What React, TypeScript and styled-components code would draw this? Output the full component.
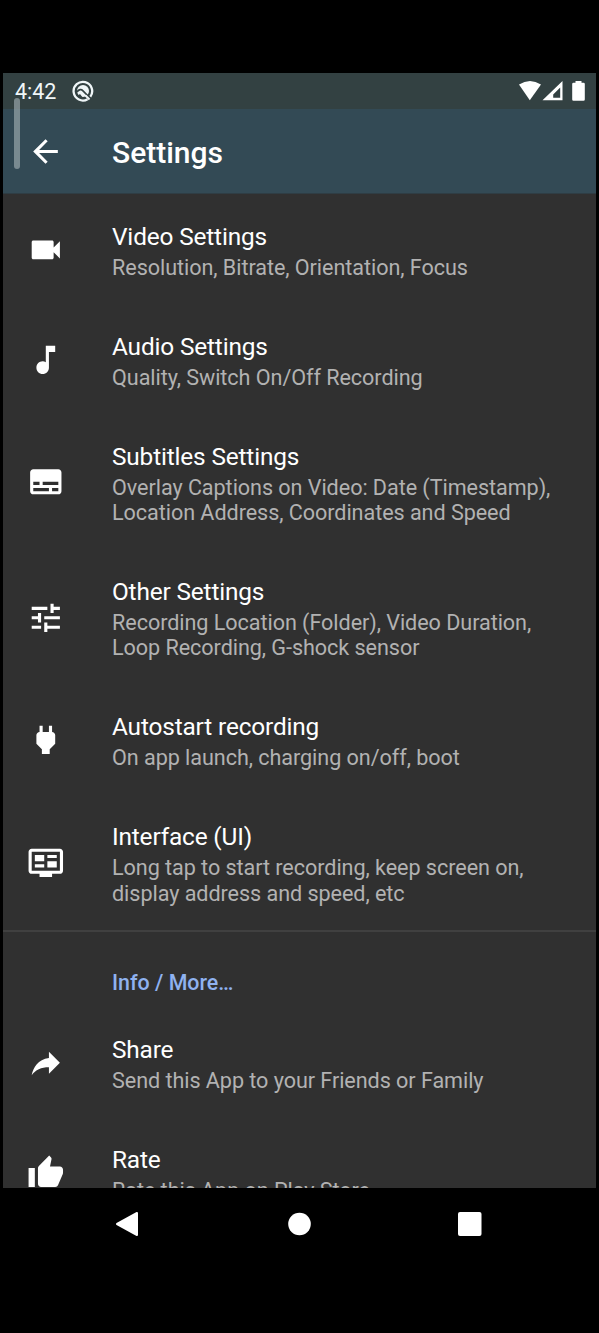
import React from "react";
import styled, { createGlobalStyle } from "styled-components";
import { MdVideocam, MdMusicNote, MdSubtitles, MdTune, MdThumbUp, MdArrowBack } from "react-icons/md";

const GlobalStyle = createGlobalStyle`
  *, *::before, *::after { box-sizing: border-box; }
  body { margin: 0; background: #000; }
`;

const Screen = styled.div`
  height: 1333px;
  padding: 73px 3px 0;
  display: flex;
  flex-direction: column;
  overflow: hidden;
  background: #000;
  color: #fff;
  font-family: Roboto, sans-serif;
`;

const StatusBar = styled.header`
  position: relative;
  height: 36px;
  flex: none;
  display: flex;
  align-items: center;
  justify-content: space-between;
  padding: 0 11px 0 12px;
  background: #334142;
`;

const StatusGroup = styled.div<{ $gap: number }>`
  display: flex;
  align-items: center;
  gap: ${(p) => p.$gap}px;
`;

const Clock = styled.span`
  padding-top: 1px;
  font-size: 21.5px;
  line-height: 36px;
  color: #f0f6f8;
`;

const ScrollHandle = styled.div`
  position: absolute;
  left: 11px;
  top: 25px;
  width: 6px;
  height: 71px;
  border-radius: 3px;
  background: rgba(160, 172, 176, 0.65);
  z-index: 1;
`;

const Toolbar = styled.div`
  height: 85px;
  flex: none;
  display: flex;
  align-items: center;
  background: #334a55;
  border-bottom: 1px solid #2f3d44;
`;

const IconSlot = styled.div`
  width: 109px;
  flex: none;
  display: flex;
  padding: 1px 0 0 23.7px;
  svg { display: block; flex: none; }
`;

const PageTitle = styled.h1`
  margin: 0;
  padding-top: 3px;
  font-size: 30px;
  line-height: 36px;
  font-weight: 500;
`;

const Content = styled.main`
  height: 994px;
  flex: none;
  overflow: hidden;
  background: #303030;
`;

const Row = styled.div<{ $lines: number }>`
  height: ${(p) => 110 + (p.$lines - 1) * 25.4}px;
  display: flex;
  align-items: center;
`;

const RowText = styled.div`
  flex: 1;
  padding-top: 2.6px;
  white-space: pre-line;
`;

const RowTitle = styled.div`
  margin-bottom: 2px;
  font-size: 24.4px;
  line-height: 32px;
  letter-spacing: -0.16px;
`;

const RowSummary = styled.div`
  font-size: 21.6px;
  line-height: 25.4px;
  letter-spacing: -0.06px;
  color: #b2b2b2;
`;

const Divider = styled.hr`
  margin: 0;
  border: 0;
  height: 2px;
  background: #404040;
`;

const Category = styled.div`
  height: 75px;
  padding: 38px 0 0 109px;
  font-size: 21.4px;
  line-height: 26px;
  font-weight: 500;
  color: #8fb2f0;
`;

const NavBar = styled.nav`
  height: 72px;
  display: flex;
  align-items: center;
  justify-content: space-between;
  padding: 0 114px 0 112px;
`;

const ICON = 37.6;

const PlugIcon = () => (
  <svg width={ICON} height={ICON} viewBox="0 0 24 24" fill="#fff">
    <path d="M16.01 7L16 3h-2v4h-4V3H8v4h-.01C7 6.99 6 7.99 6 8.99v5.49L9.5 18v3h5v-3l3.5-3.51v-5.5c0-1-1-2-1.99-1.99z" />
  </svg>
);

const MonitorIcon = () => (
  <svg width={ICON} height={ICON} viewBox="0 0 24 24" fill="#fff">
    <path fillRule="evenodd" d="M21 3H3c-1.1 0-2 .9-2 2v12c0 1.1.9 2 2 2h5v2h8v-2h5c1.1 0 2-.9 2-2V5c0-1.1-.9-2-2-2zm0 14H3V5h18v12z" />
    <path d="M5 7h6v4H5zM5 13h6v2H5zM13 7h6v2h-6zM13 11h6v4h-6z" />
  </svg>
);

const ForwardIcon = () => (
  <svg width={ICON} height={ICON} viewBox="0 0 24 24" fill="#fff">
    <path d="M14 9V5l7 7-7 7v-4.1c-5 0-8.5 1.6-11 5.1 1-5 4-10 11-11z" />
  </svg>
);

const NotificationIcon = () => (
  <svg width="22" height="22" viewBox="0 0 22 22" fill="none" stroke="#f0f6f8">
    <path d="M18.3 16.8A9.3 9.3 0 1 0 15.6 19.2" strokeWidth="2.3" />
    <circle cx="11" cy="11" r="6" fill="#f0f6f8" stroke="none" />
    <path d="M4.800 12Q8.200 8 11 10.800L17 17" stroke="#334142" strokeWidth="1.700" />
    <path d="M5.500 16L8 14L11 18H7Z" fill="#334142" stroke="none" />
    <path d="M13.500 15.500L17.500 19.500" strokeWidth="2" />
  </svg>
);

const SignalIcons = () => (
  <svg width="67" height="22" viewBox="517.5 80 67 22" fill="#fff">
    <path d="M518.5 84.5Q529.5 77.5 540.5 84.5L529.3 100.3Z" />
    <path fillRule="evenodd" d="M562 81V100.3H542ZM559.7 87.5L552.7 94.5V97.8H559.7Z" />
    <path d="M575 81h6v1.7h2q1.3 0 1.3 1.3v15.5q0 1.300-1.300 1.300h-10q-1.300 0-1.300-1.300V84q0-1.300 1.300-1.300h2Z" />
  </svg>
);

interface Item {
  title: string;
  summary: string;
  icon: React.ReactNode;
}

const settings: Item[] = [
  { title: "Video Settings", summary: "Resolution, Bitrate, Orientation, Focus", icon: <MdVideocam size={ICON} /> },
  { title: "Audio Settings", summary: "Quality, Switch On/Off Recording", icon: <MdMusicNote size={ICON} /> },
  { title: "Subtitles Settings", summary: "Overlay Captions on Video: Date (Timestamp),\nLocation Address, Coordinates and Speed", icon: <MdSubtitles size={ICON} /> },
  { title: "Other Settings", summary: "Recording Location (Folder), Video Duration,\nLoop Recording, G-shock sensor", icon: <MdTune size={ICON} /> },
  { title: "Autostart recording", summary: "On app launch, charging on/off, boot", icon: <PlugIcon /> },
  { title: "Interface (UI)", summary: "Long tap to start recording, keep screen on,\ndisplay address and speed, etc", icon: <MonitorIcon /> },
];

const more: Item[] = [
  { title: "Share", summary: "Send this App to your Friends or Family", icon: <ForwardIcon /> },
  { title: "Rate", summary: "Rate this App on Play Store", icon: <MdThumbUp size={ICON} /> },
];

const SettingRow = ({ title, summary, icon }: Item) => (
  <Row $lines={summary.split("\n").length}>
    <IconSlot>{icon}</IconSlot>
    <RowText>
      <RowTitle>{title}</RowTitle>
      <RowSummary>{summary}</RowSummary>
    </RowText>
  </Row>
);

export default function App() {
  return (
    <Screen>
      <GlobalStyle />
      <StatusBar>
        <StatusGroup $gap={16}>
          <Clock>4:42</Clock>
          <NotificationIcon />
        </StatusGroup>
        <SignalIcons />
        <ScrollHandle />
      </StatusBar>
      <Toolbar>
        <IconSlot><MdArrowBack size={37} /></IconSlot>
        <PageTitle>Settings</PageTitle>
      </Toolbar>
      <Content>
        {settings.map((item) => <SettingRow key={item.title} {...item} />)}
        <Divider />
        <Category>Info / More…</Category>
        {more.map((item) => <SettingRow key={item.title} {...item} />)}
      </Content>
      <NavBar>
        <svg width="24" height="26" viewBox="0 0 24 26" fill="#fff" stroke="#fff" strokeWidth="2" strokeLinejoin="round">
          <path d="M2 13L22 2V24Z" />
        </svg>
        <svg width="24" height="24" viewBox="0 0 24 24"><circle cx="12.5" cy="12" r="11.3" fill="#fff" /></svg>
        <svg width="24" height="24" viewBox="0 0 24 24"><rect width="23.5" height="24" rx="2" fill="#fff" /></svg>
      </NavBar>
    </Screen>
  );
}
